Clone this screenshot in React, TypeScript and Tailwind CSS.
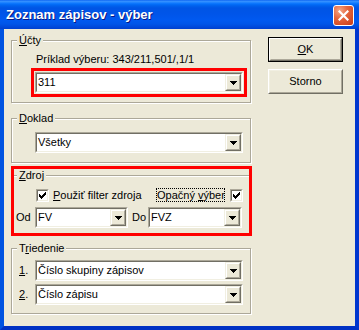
import React from "react";

const FONT = "font-['Liberation_Sans',Arial,sans-serif]";

function Arrow() {
  return (
    <svg width="7" height="4" viewBox="0 0 7 4" shapeRendering="crispEdges" className="block">
      <rect x="0" y="0" width="7" height="1" fill="#000" />
      <rect x="1" y="1" width="5" height="1" fill="#000" />
      <rect x="2" y="2" width="3" height="1" fill="#000" />
      <rect x="3" y="3" width="1" height="1" fill="#000" />
    </svg>
  );
}

function DropBtn() {
  return (
    <div className="flex h-[17px] w-[16px] shrink-0 border border-t-[#F1EFE2] border-l-[#F1EFE2] border-r-[#716F64] border-b-[#716F64]">
      <div className="flex flex-1 items-center justify-center border border-t-white border-l-white border-r-[#ACA899] border-b-[#ACA899] bg-[#ECE9D8] pt-[1px]">
        <Arrow />
      </div>
    </div>
  );
}

function Combo({ value, className }: { value: string; className: string }) {
  return (
    <div
      className={`flex h-[21px] border border-t-[#ACA899] border-l-[#ACA899] border-r-white border-b-white ${className}`}
    >
      <div className="flex min-w-0 flex-1 border border-t-[#716F64] border-l-[#716F64] border-r-[#F1EFE2] border-b-[#F1EFE2] bg-white">
        <div className="min-w-0 flex-1 truncate pl-[1px] text-[11px] leading-[17px]">{value}</div>
        <DropBtn />
      </div>
    </div>
  );
}

function Check() {
  const ys = [2, 3, 4, 3, 2, 1, 0];
  return (
    <div className="h-[13px] w-[13px] shrink-0 border border-t-[#ACA899] border-l-[#ACA899] border-r-white border-b-white">
      <div className="h-full w-full border border-t-[#716F64] border-l-[#716F64] border-r-[#F1EFE2] border-b-[#F1EFE2] bg-white p-[1px]">
        <svg width="7" height="7" viewBox="0 0 7 7" shapeRendering="crispEdges" className="block">
          {ys.map((y, x) => (
            <rect key={x} x={x} y={y} width="1" height="3" fill="#000" />
          ))}
        </svg>
      </div>
    </div>
  );
}

function Group({
  label,
  children,
  className,
}: {
  label: React.ReactNode;
  children: React.ReactNode;
  className: string;
}) {
  return (
    <fieldset
      className={`m-0 min-w-0 border border-[#ACA899] p-0 shadow-[inset_1px_1px_0_#fff,1px_1px_0_#fff] ${className}`}
    >
      <legend className="ml-[5px] bg-[#ECE9D8] px-[2px] text-[11px] leading-[13px]">{label}</legend>
      {children}
    </fieldset>
  );
}

function TitleBar() {
  return (
    <div className="flex h-[29px] items-start bg-[linear-gradient(to_bottom,#0058EE_0px,#3A93FF_1px,#2A8BFF_2px,#157DFF_3px,#0470FA_4px,#0060EC_6px,#0055E5_8px,#0055E9_14px,#0059F0_20px,#0055E8_24px,#0048DA_27px,#0040CE_29px)] pl-[6px] pr-[5px]">
      <span className="mt-[7px] text-[13px] font-bold leading-[16px] text-white [text-shadow:1px_1px_0_#0A1883]">
        Zoznam zápisov - výber
      </span>
      <div className="ml-auto mt-[5px] flex h-[21px] w-[21px] items-center justify-center rounded-[3px] border border-white bg-[radial-gradient(circle_at_30%_25%,#F4A888_0%,#E5673F_40%,#C93B15_100%)]">
        <svg width="11" height="11" viewBox="0 0 11 11" className="block">
          <path d="M1.5 1.5 L9.5 9.5 M9.5 1.5 L1.5 9.5" stroke="#fff" strokeWidth="2.2" strokeLinecap="square" />
        </svg>
      </div>
    </div>
  );
}

export default function App() {
  return (
    <div className={`h-[330px] w-[359px] overflow-hidden ${FONT} text-[11px] leading-[13px] text-black`}>
      <TitleBar />
      <div className="flex h-[301px] border-x-4 border-b-4 border-l-[#0053E1] border-r-[#0036CF] border-b-[#0031C4] bg-[#ECE9D8]">
        <div className="ml-[7px] flex w-[240px] shrink-0 flex-col pt-[5px]">
          {/* Účty */}
          <Group className="w-[240px]" label={<><u>Ú</u>čty</>}>
            <div className="pl-[24px] pt-[6px] whitespace-nowrap">Príklad výberu: 343/211,501/,1/1</div>
            <div className="ml-[19px] mt-[2px] w-[216px] border-[3px] border-[#FF0000] p-[1px]">
              <Combo value="311" className="w-[208px]" />
            </div>
            <div className="h-[5px]" />
          </Group>

          {/* Doklad */}
          <Group className="mt-[9px] w-[240px]" label={<><u>D</u>oklad</>}>
            <div className="pl-[23px] pt-[7px] pb-[9px]">
              <Combo value="Všetky" className="w-[208px]" />
            </div>
          </Group>

          {/* Zdroj */}
          <div className="mt-[3px] w-[241px] border-[3px] border-[#FF0000]">
            <fieldset className="m-0 min-w-0 border-0 border-t border-t-[#ACA899] p-0 shadow-[inset_0_1px_0_#fff]">
              <legend className="ml-[3px] bg-[#ECE9D8] px-[2px] text-[11px] leading-[13px]">
                <u>Z</u>droj
              </legend>
              <div className="flex h-[14px] items-center pt-0 mt-[6px]">
                <div className="ml-[22px]">
                  <Check />
                </div>
                <span className="ml-[4px] whitespace-nowrap">
                  <u>P</u>oužiť filter zdroja
                </span>
                <span className="ml-auto h-[14px] w-[69px] whitespace-nowrap border border-dotted border-black leading-[12px]">
                  Opačný <u>v</u>ýber
                </span>
                <div className="ml-[5px] mr-[6px]">
                  <Check />
                </div>
              </div>
              <div className="mt-[5px] flex items-center pb-[5px]">
                <span className="ml-[2px] w-[19px]">Od</span>
                <Combo value="FV" className="w-[93px]" />
                <span className="ml-[4px] w-[16px]">Do</span>
                <Combo value="FVZ" className="w-[94px]" />
              </div>
            </fieldset>
          </div>

          {/* Triedenie */}
          <Group className="mt-[6px] w-[240px]" label={<>T<u>r</u>iedenie</>}>
            <div className="flex flex-col gap-[3px] pt-[5px] pb-[8px]">
              <div className="flex items-center">
                <span className="ml-[7px] w-[16px]">
                  <u>1</u>.
                </span>
                <Combo value="Číslo skupiny zápisov" className="w-[208px]" />
              </div>
              <div className="flex items-center">
                <span className="ml-[7px] w-[16px]">
                  <u>2</u>.
                </span>
                <Combo value="Číslo zápisu" className="w-[208px]" />
              </div>
            </div>
          </Group>
        </div>

        <div className="ml-[17px] flex flex-col pt-[8px]">
          <div className="flex h-[25px] w-[75px] border border-black">
            <div className="flex flex-1 border border-t-white border-l-white border-r-[#716F64] border-b-[#716F64]">
              <div className="flex flex-1 items-center justify-center border border-t-[#ECE9D8] border-l-[#ECE9D8] border-r-[#ACA899] border-b-[#ACA899]">
                <span>
                  <u>O</u>K
                </span>
              </div>
            </div>
          </div>
          <div className="mt-[7px] flex h-[25px] w-[75px] border border-t-white border-l-white border-r-[#716F64] border-b-[#716F64]">
            <div className="flex flex-1 items-center justify-center border border-t-[#F1EFE2] border-l-[#F1EFE2] border-r-[#ACA899] border-b-[#ACA899]">
              <span>Storno</span>
            </div>
          </div>
        </div>
      </div>
    </div>
  );
}
